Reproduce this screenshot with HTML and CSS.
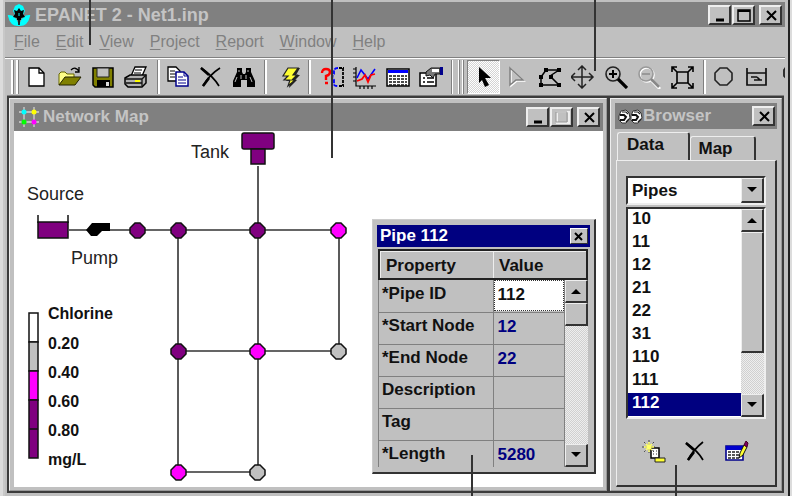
FILE: index.html
```html
<!DOCTYPE html>
<html lang="en">
<head>
<meta charset="utf-8">
<title>EPANET 2 - Net1.inp</title>
<link rel="stylesheet" href="styles.css">
</head>
<body>
<div class="app">
  <header class="title-bar main-title">
    <svg class="app-icon" width="24" height="24" viewBox="0 0 24 24"><path d="M8 3l4-2 4 2 2 5-3 6H9L6 8z" fill="#0ff"/><path d="M2 13q6 0 9 9-7 0-9-9zM22 13q-6 0-9 9 7 0 9-9z" fill="#0ff" stroke="#0ff" stroke-width="2"/><path d="M12 5l2 3 3-1-1 4 2 3-4 1v2h-4v-2l-4-1 2-3-1-4 3 1z" fill="#000"/><path d="M12 15v7" stroke="#000" stroke-width="1.5"/><path d="M11 10h2v3h-2z" fill="#087878"/></svg>
    <h1>EPANET 2 - Net1.inp</h1>
    <div class="caption-buttons">
      <button aria-label="Minimize"><svg width="18" height="16"><path d="M5 13h8" stroke="#000" stroke-width="3"/></svg></button>
      <button aria-label="Maximize"><svg width="18" height="16"><path d="M3 3h12v11H3z" fill="none" stroke="#000" stroke-width="1.5"/><path d="M3 4h12" stroke="#000" stroke-width="2"/></svg></button>
      <button class="close" aria-label="Close"><svg width="18" height="16"><path d="M5 4l9 9M14 4l-9 9" stroke="#000" stroke-width="2"/></svg></button>
    </div>
  </header>

  <nav class="menu">
    <a href="#"><u>F</u>ile</a><a href="#"><u>E</u>dit</a><a href="#"><u>V</u>iew</a><a href="#"><u>P</u>roject</a><a href="#"><u>R</u>eport</a><a href="#"><u>W</u>indow</a><a href="#"><u>H</u>elp</a>
  </nav>

  <div class="toolbar" role="toolbar">
    <span class="grip"></span>
    <button aria-label="New"><svg width="24" height="24"><path d="M4 3h10l5 5v13H4z" fill="#fff" stroke="#000" stroke-width="1.3"/><path d="M14 3v5h5" fill="none" stroke="#000" stroke-width="1.3"/></svg></button>
    <button aria-label="Open"><svg width="24" height="24"><path d="M1 20V9l2-2h4l2 2h7v4" fill="#ff8" stroke="#660"/><path d="M1 20l6-8h16l-6 8z" fill="#808000" stroke="#220"/><path d="M13 5q4-4 8 1M21 2v5h-4" fill="none" stroke="#000" stroke-width="1.3"/></svg></button>
    <button aria-label="Save"><svg width="24" height="24"><path d="M2 3h20v19H4l-2-2z" fill="#808000" stroke="#000" stroke-width="1.5"/><path d="M6 3h12v9H6z" fill="#c0c0c0" stroke="#222"/><path d="M6 15h13v7H6z" fill="#000"/><path d="M15 17h3v4h-3z" fill="#ddd"/></svg></button>
    <button aria-label="Print"><svg width="26" height="24"><path d="M8 11l4-9h11l-4 9z" fill="#fff" stroke="#000" stroke-width="1.3"/><path d="M12 5h7M11 8h7" stroke="#000"/><path d="M2 13l5-3h16v8l-4 4H5l-3-3z" fill="#b0b0b0" stroke="#000" stroke-width="1.5"/><path d="M2 14h17l4-4M19 14v7M3 18h16" fill="none" stroke="#111" stroke-width="1.3"/><path d="M12 16h5" stroke="#ff0" stroke-width="2"/></svg></button>
    <span class="separator"></span>
    <button aria-label="Copy"><svg width="24" height="24"><path d="M2 2h8l4 4v10H2z" fill="#fff" stroke="#000" stroke-width="1.3"/><path d="M4 6h5M4 9h6M4 12h5" stroke="#000"/><path d="M10 7h8l4 4v10H10z" fill="#fff" stroke="#00008b" stroke-width="1.5"/><path d="M18 7v4h4M12 12h5M12 15h8M12 18h8" fill="none" stroke="#00008b"/></svg></button>
    <button aria-label="Delete"><svg width="24" height="24"><path d="M2 3q12 8 18 18M21 3Q10 10 4 21" fill="none" stroke="#000" stroke-width="1.7"/><path d="M2 3l8 7M10 13l-6 8" stroke="#000" stroke-width="2.6"/></svg></button>
    <button aria-label="Find"><svg width="24" height="24"><path d="M5 3h5v4l1 2h2l1-2V3h5v4l4 9v6h-8v-7h-6v7H1v-6l4-9z" fill="#000"/><path d="M7 5v2M16 5v2M5 12l-2 5M14 10v4M18 12l2 5M9 10v4" stroke="#bbb"/></svg></button>
    <span class="separator wide"></span>
    <button aria-label="Run"><svg width="24" height="24"><path d="M10 3h11l-4 7h4l-5 5h2l-8 8 1-7H7l3-5H5z" fill="#222"/><path d="M9 3h10l-5 7h4l-5 5h3l-7 6 2-6H5l4-4H4z" fill="#ff3" stroke="#222" stroke-width="1.2"/></svg></button>
    <span class="separator short"></span>
    <button aria-label="Query"><svg width="26" height="24"><path d="M3 8q0-4 4-4t4 3-4 4v4M6 18h3" fill="none" stroke="#f00" stroke-width="2.4"/><path d="M19 3q-4 0-4 3v3l-2 3 2 3v4q0 2 4 2" fill="none" stroke="#00f" stroke-width="1.8" stroke-dasharray="4 1"/><path d="M20 3h5M20 21h5M24 3v18" stroke="#000" stroke-width="1.8" stroke-dasharray="3 1"/></svg></button>
    <button aria-label="Graph"><svg width="24" height="24"><path d="M3 2v19h20M0 4h3M0 8h3M0 12h3M0 16h3M7 21v3M11 21v3M15 21v3M19 21v3" fill="none" stroke="#000" stroke-width="1.2"/><path d="M4 13l4-8 7 9 7-10" fill="none" stroke="#00f" stroke-width="1.6"/><path d="M4 16l5-2 3-4 3 7 3-7 4-1" fill="none" stroke="#f00" stroke-width="1.8"/></svg></button>
    <button aria-label="Table"><svg width="24" height="24"><path d="M1 4h22v17H1z" fill="#fff" stroke="#000" stroke-width="1.5"/><path d="M2 5h20v3H2z" fill="#00f"/><path d="M3 11h18M3 14h18M3 17h18M3 20h18" stroke="#111" stroke-width="1.3" stroke-dasharray="3 1"/></svg></button>
    <button aria-label="Options"><svg width="26" height="24"><path d="M2 8h16v13H2z" fill="#fff" stroke="#000" stroke-width="1.5"/><path d="M5 13h2M9 13h7M5 17h2M9 17h7" stroke="#000" stroke-width="1.5"/><path d="M8 7l5-4h9v6h-5l-2 4-3-3-4 1z" fill="#777" stroke="#111"/><path d="M14 4h7v3h-7z" fill="#fff"/><path d="M22 2h3v8h-3z" fill="#00008b"/></svg></button>
    <span class="grip second"></span>
    <button class="pressed" aria-label="Select Object"><svg width="24" height="24"><path d="M7 2l12 11h-6l4 7-4 2-3-7-3 3z" fill="#000"/></svg></button>
    <button aria-label="Select Vertex" disabled><svg width="24" height="24"><path d="M6 4l13 12h-7l-6 5z" fill="none" stroke="#fff" stroke-width="1.5"/><path d="M5 3l13 12h-7l-6 5z" fill="none" stroke="#808080" stroke-width="1.5"/></svg></button>
    <button aria-label="Select Region"><svg width="24" height="24"><path d="M3 20v-8l5-7h13l-9 6 9 9z" fill="none" stroke="#000" stroke-width="1.5"/><path d="M1 18h4v4H1zM1 10h4v4H1zM6 3h4v4H6zM19 3h4v4h-4zM11 10h4v4h-4zM19 18h4v4h-4z"/></svg></button>
    <button aria-label="Pan"><svg width="24" height="24"><path d="M11 1v22M0 12h22M7 5l4-4 4 4M7 19l4 4 4-4M4 8l-4 4 4 4M18 8l4 4-4 4" fill="none" stroke="#222" stroke-width="1.5"/></svg></button>
    <button aria-label="Zoom In"><svg width="24" height="24"><circle cx="9" cy="9" r="7" fill="none" stroke="#222" stroke-width="1.6"/><path d="M5 9h8M9 5v8" stroke="#000" stroke-width="2"/><path d="M14 14l9 9" stroke="#000" stroke-width="3.2"/></svg></button>
    <button aria-label="Zoom Out" disabled><svg width="24" height="24"><circle cx="10" cy="10" r="7" fill="none" stroke="#fff" stroke-width="1.6"/><circle cx="9" cy="9" r="7" fill="none" stroke="#999" stroke-width="1.6"/><path d="M5 9h8" stroke="#999" stroke-width="2"/><path d="M15 16l8 8" stroke="#fff" stroke-width="3"/><path d="M14 14l8 8" stroke="#888" stroke-width="2.5"/></svg></button>
    <button aria-label="Full Extent"><svg width="24" height="24"><path d="M7 7h11v11H7zM2 7V2h5M18 2h5v5M23 18v5h-5M7 23H2v-5M2 2l5 5M23 2l-5 5M23 23l-5-5M2 23l5-5" fill="none" stroke="#000" stroke-width="1.6"/></svg></button>
    <span class="separator"></span>
    <button aria-label="Add Junction"><svg width="24" height="24"><path d="M8 3h7l5 5v7l-5 5H8l-5-5V8z" fill="none" stroke="#222" stroke-width="1.6"/></svg></button>
    <button aria-label="Add Reservoir"><svg width="24" height="24"><path d="M2 3v17h19V3M2 8h19M6 12h6M9 15h8M12 12l3 3" fill="none" stroke="#111" stroke-width="1.7"/></svg></button>
    <button aria-label="Add Tank"><svg width="24" height="24"><path d="M11 20v-7H8l-2-2V5l2-3h10l2 3v8h-5v9" fill="none" stroke="#222" stroke-width="1.8"/></svg></button>
  </div>

  <main class="workspace">
    <section class="window map-window">
      <header class="title-bar">
        <svg width="24" height="22" viewBox="0 0 24 22"><path d="M9 1v20M19 1v20M4 6h20M4 16h20" stroke="#d0d0d0" stroke-width="1.3"/><circle cx="9" cy="6" r="2.5" fill="#0ff"/><circle cx="19" cy="6" r="2.5" fill="#ff0"/><circle cx="9" cy="16" r="2.5" fill="#0f0"/><circle cx="19" cy="16" r="2.5" fill="#f0f"/></svg>
        <h2>Network Map</h2>
        <div class="caption-buttons">
          <button aria-label="Minimize"><svg width="18" height="16"><path d="M5 13h8" stroke="#000" stroke-width="3"/></svg></button>
          <button aria-label="Maximize"><svg width="18" height="16"><path d="M4 3h12v11H4z" fill="none" stroke="#eee" stroke-width="2"/><path d="M3 3h11v10H3z" fill="none" stroke="#999"/></svg></button>
          <button class="close" aria-label="Close"><svg width="18" height="16"><path d="M5 4l9 9M14 4l-9 9" stroke="#000" stroke-width="2"/></svg></button>
        </div>
      </header>
      <div class="canvas">
        <svg class="network" width="100%" height="100%">
          <g fill="none" stroke="#333" stroke-width="1.6">
            <path d="M55 99H325M244 35V341H164V99M164 220H325V99"/>
          </g>
          <g fill="#800080" stroke="#111" stroke-width="1.5">
            <rect x="228" y="2" width="32" height="16" rx="2"/><path d="M237 18h14v15h-14z"/>
            <path d="M24 91h30v16H24z"/><path d="M24 84v8M54 84v8"/>
            <path d="M121 92h5l5 5v5l-5 5h-5l-5-5v-5z"/>
            <path d="M162 92h5l5 5v5l-5 5h-5l-5-5v-5zM241 92h5l5 5v5l-5 5h-5l-5-5v-5zM162 213h5l5 5v5l-5 5h-5l-5-5v-5z"/>
            <path fill="#f0f" d="M322 92h5l5 5v5l-5 5h-5l-5-5v-5zM241 213h5l5 5v5l-5 5h-5l-5-5v-5zM162 334h5l5 5v5l-5 5h-5l-5-5v-5z"/>
            <path fill="#c0c0c0" d="M322 213h5l5 5v5l-5 5h-5l-5-5v-5zM241 334h5l5 5v5l-5 5h-5l-5-5v-5z"/>
          </g>
          <path d="M72 99l6-7h18v8h-8l-5 5h-6z"/>
          <g class="map-label"><text x="177" y="27">Tank</text><text x="13" y="69">Source</text><text x="57" y="133">Pump</text></g>
          <g stroke="#111" stroke-width="1.5">
            <path fill="#fff" d="M15 182h9v29h-9z"/><path fill="#c0c0c0" d="M15 211h9v29h-9z"/><path fill="#f0f" d="M15 240h9v29h-9z"/><path fill="#800080" d="M15 269h9v29h-9zM15 298h9v29h-9z"/>
          </g>
          <g class="legend-label"><text x="34" y="188">Chlorine</text><text x="34" y="218">0.20</text><text x="34" y="247">0.40</text><text x="34" y="276">0.60</text><text x="34" y="305">0.80</text><text x="34" y="334">mg/L</text></g>
        </svg>

        <section class="window property-window">
          <header class="title-bar active"><h2>Pipe 112</h2><button class="close" aria-label="Close"><svg width="12" height="11"><path d="M2 2l7 7M9 2l-7 7" stroke="#000" stroke-width="2"/></svg></button></header>
          <div class="grid-head"><span>Property</span><span>Value</span></div>
          <div class="grid-body">
            <table>
              <tr><th><label for="p1">*Pipe ID</label></th><td><input id="p1" class="current" value="112"></td></tr>
              <tr><th><label for="p2">*Start Node</label></th><td><input id="p2" value="12"></td></tr>
              <tr><th><label for="p3">*End Node</label></th><td><input id="p3" value="22"></td></tr>
              <tr><th><label for="p4">Description</label></th><td><input id="p4" value=""></td></tr>
              <tr><th><label for="p5">Tag</label></th><td><input id="p5" value=""></td></tr>
              <tr><th><label for="p6">*Length</label></th><td><input id="p6" value="5280"></td></tr>
            </table>
            <div class="scrollbar">
              <button aria-label="Scroll up"><svg width="12" height="8"><path d="M1 7l5-5 5 5z"/></svg></button>
              <span class="thumb small"></span>
              <button class="down" aria-label="Scroll down"><svg width="12" height="8"><path d="M1 1l5 5 5-5z"/></svg></button>
            </div>
          </div>
        </section>
      </div>
    </section>

    <section class="window browser-window">
      <header class="title-bar">
        <svg width="26" height="18" viewBox="0 0 26 18"><path d="M2 9l2-5 5-1 3 3 1 5-4 5H5l-3-3zM14 9l2-5 5-1 3 3 1 5-4 5h-4l-3-3z" fill="#fff" stroke="#333"/><path d="M3 8h4l2 2-2 3H3M15 8h4l2 2-2 3h-4" fill="none" stroke="#111" stroke-width="2"/><path d="M5 5h4l2 2M17 5h4l2 2M9 15l3-3M21 15l3-3" fill="none" stroke="#222" stroke-width="1.2"/></svg>
        <h2>Browser</h2>
        <div class="caption-buttons"><button class="close" aria-label="Close"><svg width="18" height="16"><path d="M5 4l9 9M14 4l-9 9" stroke="#000" stroke-width="2"/></svg></button></div>
      </header>
      <div class="tabs" role="tablist"><button class="selected" role="tab">Data</button><button role="tab">Map</button></div>
      <div class="tab-page">
        <div class="combo"><select aria-label="Category"><option>Pipes</option></select><span class="combo-arrow"><svg width="12" height="8"><path d="M1 1l5 5 5-5z"/></svg></span></div>
        <div class="list">
          <select size="9" aria-label="Items"><option>10</option><option>11</option><option>12</option><option>21</option><option>22</option><option>31</option><option>110</option><option>111</option><option selected>112</option></select>
          <div class="scrollbar">
            <button aria-label="Scroll up"><svg width="12" height="8"><path d="M1 7l5-5 5 5z"/></svg></button>
            <span class="thumb"></span>
            <button class="down" aria-label="Scroll down"><svg width="12" height="8"><path d="M1 1l5 5 5-5z"/></svg></button>
          </div>
        </div>
        <div class="actions">
          <button aria-label="Add"><svg width="26" height="24"><path d="M10 8h8v10h-8z" fill="#fff" stroke="#000" stroke-width="1.5"/><path d="M12 11h1M15 11h1M12 14h1M15 14h1" stroke="#333"/><path d="M8 0v13M1 7h13M3 2l10 10M13 2L3 12" stroke="#444" stroke-dasharray="2 1"/><path d="M8 2v10M3 7h10M5 4l6 6M11 4l-6 6" stroke="#ff6" stroke-width="1.5"/><path d="M14 18h10v4H14z" fill="#ff3" stroke="#222"/></svg></button>
          <button aria-label="Delete"><svg width="22" height="22"><path d="M2 2q12 8 17 17M19 1Q9 9 4 19" fill="none" stroke="#000" stroke-width="1.7"/><path d="M2 2l8 7M10 11l-6 8" stroke="#000" stroke-width="2.6"/></svg></button>
          <button aria-label="Edit"><svg width="26" height="24"><path d="M3 6h17v14H3z" fill="#fff" stroke="#00008b" stroke-width="1.6"/><path d="M3 6h17v4H3z" fill="#00c"/><path d="M5 12h12M5 15h12M5 18h12" stroke="#222" stroke-width="1.4" stroke-dasharray="3 1"/><path d="M16 18l1-5 4-8 3 2-4 8z" fill="#ff3" stroke="#111"/><path d="M21 5l2-4 2 2-1 4z" fill="#800060" stroke="#402"/></svg></button>
        </div>
      </div>
    </section>
  </main>
</div>
<span class="callout menu-line"></span><span class="callout map-line"></span><span class="callout toolbar-line"></span><span class="callout property-line"></span><span class="callout browser-line"></span>
</body>
</html>
```
FILE: styles.css
```css
* { box-sizing: border-box; }
body {
  margin: 0;
  height: 100vh;
  position: relative;
  overflow: hidden;
  background: #dcdcdc;
  color: #111;
  font: bold 17px/20px "Liberation Sans", Arial, sans-serif;
}
button, input, select { font: inherit; color: inherit; border-radius: 0; margin: 0; padding: 0; }
button { background: #c0c0c0; border: 0; display: flex; align-items: center; justify-content: center; }
h1, h2 { margin: 0; font: inherit; }
svg { display: block; flex: none; }

.app {
  height: 100%;
  margin: 0 2px 0 3px;
  padding: 2px 0 3px;
  border-left: 2px solid #c8c8c8;
  border-right: 2px solid #222;
  background: #c0c0c0;
  display: flex;
  flex-direction: column;
}
.title-bar { display: flex; align-items: center; height: 28px; background: #808080; color: #c4c4c4; flex: none; }
.title-bar h1, .title-bar h2 { flex: 1; white-space: nowrap; }
.main-title { height: 25px; margin-right: 3px; padding: 0 3px 0 2px; }
.main-title h1 { margin-left: 4px; font-size: 18px; }
.caption-buttons { display: flex; gap: 1px; }
.caption-buttons button {
  width: 23px;
  height: 20px;
  border: 2px solid;
  border-color: #eee #333 #333 #eee;
}
.caption-buttons .close { margin-left: 3px; }

.menu { display: flex; gap: 16px; height: 30px; padding: 5px 9px; flex: none; font-weight: normal; font-size: 16px; }
.menu a { color: #808080; text-decoration: none; }
.menu u { text-underline-offset: 2px; }

.toolbar {
  display: flex;
  height: 38px;
  flex: none;
  margin-right: 3px;
  padding: 2px 0 1px;
  overflow: hidden;
  border-top: 1px solid #808080;
  box-shadow: inset 0 1px #fff;
}
.toolbar button { width: 33px; flex: none; background: transparent; }
.toolbar .pressed {
  border: 1px solid;
  border-color: #808080 #fff #fff #808080;
  background: repeating-conic-gradient(#fff 0 25%, #d4d4d4 0 50%) 0 0 / 2px 2px;
}
.grip { width: 15px; flex: none; background: linear-gradient(90deg, transparent 6px, #fff 6px 8px, #808080 8px 9px, transparent 9px 11px, #fff 11px 13px, #808080 13px 14px, transparent 14px); }
.grip.second { width: 20px; background: linear-gradient(90deg, transparent 4px, #808080 4px 5px, #fff 5px 6px, transparent 6px 11px, #fff 11px 12px, #808080 12px 13px, transparent 13px 15px, #fff 15px 16px, #808080 16px 17px, transparent 17px); }
.separator { width: 9px; flex: none; background: linear-gradient(90deg, transparent 5px, #808080 5px 6px, #fff 6px 8px, transparent 8px); }
.separator.wide { width: 14px; background: linear-gradient(90deg, transparent 4px, #808080 4px 5px, #fff 5px 7px, transparent 7px); }
.separator.short { width: 8px; background: linear-gradient(90deg, transparent 1px, #808080 1px 2px, #fff 2px 4px, transparent 4px); }

.workspace {
  flex: 1;
  min-height: 0;
  display: flex;
  gap: 3px;
  margin: 0 4px 0 2px;
  padding: 2px;
  background: #3c3c3c;
  border-top: 1px solid #808080;
}
.window { background: #c0c0c0; border: 1px solid #eee; border-right-color: #999; border-bottom-color: #999; display: flex; flex-direction: column; }
.map-window { flex: 1; min-width: 0; padding: 4px 3px 3px 4px; }
.map-window > .title-bar { padding: 0 3px 0 1px; }
.map-window > .title-bar h2 { margin-left: 4px; }
.canvas { flex: 1; min-height: 0; position: relative; background: #fff; overflow: hidden; }
.network { position: absolute; inset: 0; }
.map-label { font-size: 18px; font-weight: normal; fill: #222; }
.legend-label { font-size: 16px; fill: #111; }

.property-window {
  position: absolute;
  top: 88px;
  right: 7px;
  width: 224px;
  height: 255px;
  padding: 5px 4px;
  border: 1px solid #ccc;
  border-right: 2px solid #333;
  border-bottom: 2px solid #333;
}
.title-bar.active { height: 22px; background: #000080; color: #fff; padding: 0 2px 0 3px; }
.property-window .close { width: 18px; height: 16px; border: 1px solid; border-color: #fff #333 #333 #fff; }
.grid-head { display: flex; height: 31px; margin: 2px 2px 0 1px; border: 2px solid #222; flex: none; }
.grid-head span { padding: 4px 5px; width: 113px; border-left: 1px solid #eee; border-top: 1px solid #eee; }
.grid-head span + span { flex: 1; }
.grid-body { display: flex; flex: 1; min-height: 0; overflow: hidden; margin: 0 2px 0 1px; border-left: 1px solid #808080; }
.property-window table { flex: 1; border-collapse: collapse; table-layout: fixed; height: 192px; }
.property-window th { width: 114px; height: 32px; padding: 0 0 4px 3px; text-align: left; font-weight: bold; border-bottom: 1px solid #808080; border-right: 1px solid #808080; white-space: nowrap; }
.property-window td { padding: 0; height: 32px; border-bottom: 1px solid #808080; border-right: 1px solid #808080; }
.property-window input { width: 100%; height: 31px; display: block; padding: 0 4px 2px; border: 0; background: transparent; color: #000080; }
.property-window input.current { background: #fff; color: #111; outline: 1px dotted #333; outline-offset: -1px; }

.scrollbar {
  width: 23px;
  flex: none;
  display: flex;
  flex-direction: column;
  background: repeating-conic-gradient(#eee 0 25%, #d0d0d0 0 50%) 0 0 / 2px 2px;
}
.scrollbar button, .thumb, .combo-arrow { border: 1px solid; border-width: 1px 2px 2px 1px; border-color: #eee #333 #333 #eee; background: #c0c0c0; flex: none; }
.scrollbar button { height: 23px; }
.scrollbar .down { margin-top: auto; }
.thumb { height: 121px; }
.thumb.small { height: 23px; }

.browser-window { width: 172px; flex: none; padding: 4px 4px 3px; }
.browser-window > .title-bar { height: 26px; padding: 0 2px; }
.tabs { display: flex; align-items: flex-end; height: 31px; padding-left: 2px; flex: none; }
.tabs button { height: 24px; width: 66px; padding-right: 14px; border: 1px solid #eee; border-right: 2px solid #333; border-bottom: 0; border-radius: 3px 3px 0 0; }
.tabs .selected { height: 28px; width: 73px; padding-right: 15px; padding-bottom: 3px; }
.tab-page {
  flex: 1;
  min-height: 0;
  display: flex;
  flex-direction: column;
  margin-left: 1px;
  padding: 15px 9px 0;
  border: 1px solid #eee;
  border-right: 2px solid #333;
  border-bottom: 2px solid #333;
}
.combo, .list { display: flex; flex: none; background: #fff; border: 2px solid; border-color: #333 #eee #eee #333; }
.combo { position: relative; height: 29px; margin-bottom: 2px; }
.combo select { appearance: none; flex: 1; border: 0; padding-left: 4px; background: #fff; outline: 0; }
.combo-arrow { position: absolute; right: 0; top: 0; width: 23px; height: 25px; display: flex; align-items: center; justify-content: center; pointer-events: none; }
.list { height: 212px; }
.list select { flex: 1; min-width: 0; border: 0; outline: 0; background: #fff; overflow: hidden; scrollbar-width: none; }
.list option { height: 23px; min-height: 23px; padding: 0 4px; font: bold 17px/20px "Liberation Sans", Arial, sans-serif; }
.list option:checked { background: linear-gradient(#000080, #000080); color: #fff; }
.actions { display: flex; gap: 17px; padding: 21px 0 0 15px; }
.actions button { background: transparent; height: 24px; }

.callout { position: absolute; width: 2px; background: #333; }
.menu-line { left: 89px; top: 0; height: 45px; }
.map-line { left: 331px; top: 0; height: 158px; }
.toolbar-line { left: 594px; top: 0; height: 71px; }
.property-line { left: 471px; bottom: 0; height: 41px; }
.browser-line { left: 675px; bottom: 0; height: 31px; }
```
